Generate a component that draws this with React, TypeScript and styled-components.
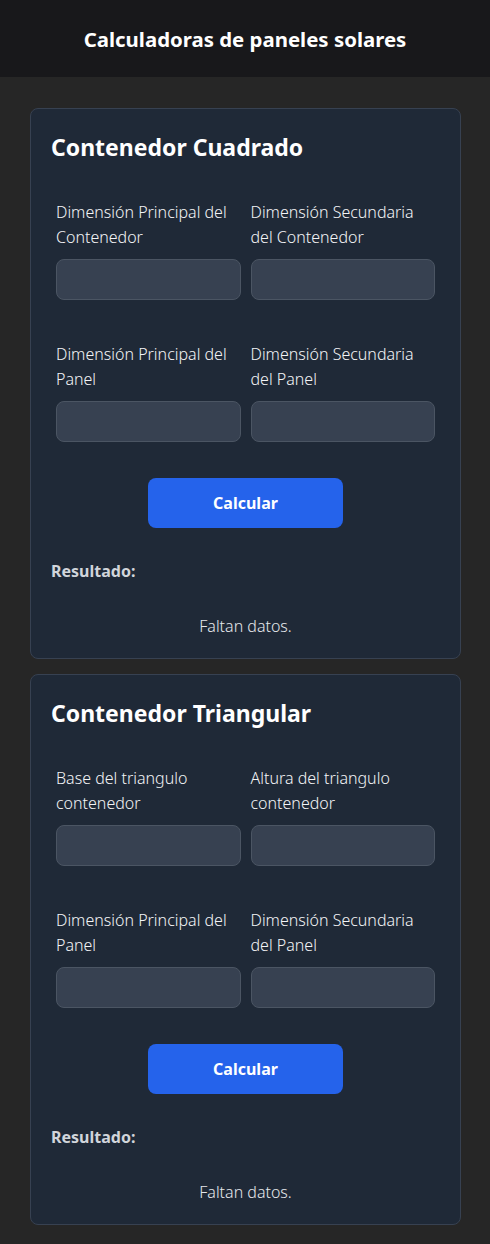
import styled, { createGlobalStyle } from 'styled-components';

const GlobalStyle = createGlobalStyle`
  * {
    box-sizing: border-box;
  }

  body {
    margin: 0;
    background: #262626;
    font-family: 'Noto Sans', 'Open Sans', sans-serif;
    color: #e5e7eb;
  }
`;

const Header = styled.header`
  height: 77px;
  display: flex;
  align-items: center;
  justify-content: center;
  background: #18181b;
`;

const HeaderTitle = styled.h1`
  margin: 0;
  font-size: 20.4px;
  font-weight: 700;
  color: #ffffff;
`;

const Main = styled.main`
  display: flex;
  flex-direction: column;
  gap: 15px;
  padding: 31px 29px 20px 30px;
`;

const Card = styled.section`
  background: #1f2937;
  border: 1px solid #374151;
  border-radius: 8px;
  padding: 20px;
`;

const CardTitle = styled.h2`
  margin: 2px 0 0;
  font-size: 23px;
  line-height: 32px;
  font-weight: 700;
  color: #ffffff;
`;

const FieldGrid = styled.div`
  display: grid;
  grid-template-columns: 1fr 1fr;
  row-gap: 32px;
  margin-top: 32px;
`;

const Field = styled.div`
  display: flex;
  flex-direction: column;
  gap: 9px;
  padding: 5px;
`;

const Label = styled.label`
  font-size: 16px;
  line-height: 25px;
  font-weight: 300;
  color: #f3f4f6;
`;

const Input = styled.input`
  height: 41px;
  width: 100%;
  background: #374151;
  border: 1px solid #4b5563;
  border-radius: 8px;
  color: #ffffff;
  font: inherit;
  padding: 0 12px;
  outline: none;
`;

const ButtonRow = styled.div`
  display: flex;
  justify-content: center;
  margin-top: 31px;
`;

const Button = styled.button`
  width: 195px;
  height: 50px;
  border: none;
  border-radius: 8px;
  background: #2563eb;
  color: #ffffff;
  font-family: inherit;
  font-size: 16px;
  font-weight: 700;
  cursor: pointer;
`;

const ResultLabel = styled.p`
  margin: 31px 0 0;
  font-size: 16px;
  line-height: 24px;
  font-weight: 700;
  color: #d1d5db;
`;

const ResultText = styled.p`
  margin: 31px 0 0;
  text-align: center;
  font-size: 16px;
  line-height: 24px;
  font-weight: 300;
  color: #e5e7eb;
`;

type Calc = {
  title: string;
  labels: string[];
};

const calculators: Calc[] = [
  {
    title: 'Contenedor Cuadrado',
    labels: [
      'Dimensión Principal del Contenedor',
      'Dimensión Secundaria del Contenedor',
      'Dimensión Principal del Panel',
      'Dimensión Secundaria del Panel',
    ],
  },
  {
    title: 'Contenedor Triangular',
    labels: [
      'Base del triangulo contenedor',
      'Altura del triangulo contenedor',
      'Dimensión Principal del Panel',
      'Dimensión Secundaria del Panel',
    ],
  },
];

const Calculator = ({ title, labels }: Calc) => (
  <Card>
    <CardTitle>{title}</CardTitle>
    <FieldGrid>
      {labels.map((label) => (
        <Field key={label}>
          <Label>{label}</Label>
          <Input type="number" />
        </Field>
      ))}
    </FieldGrid>
    <ButtonRow>
      <Button>Calcular</Button>
    </ButtonRow>
    <ResultLabel>Resultado:</ResultLabel>
    <ResultText>Faltan datos.</ResultText>
  </Card>
);

export default function App() {
  return (
    <>
      <GlobalStyle />
      <Header>
        <HeaderTitle>Calculadoras de paneles solares</HeaderTitle>
      </Header>
      <Main>
        {calculators.map((c) => (
          <Calculator key={c.title} {...c} />
        ))}
      </Main>
    </>
  );
}
